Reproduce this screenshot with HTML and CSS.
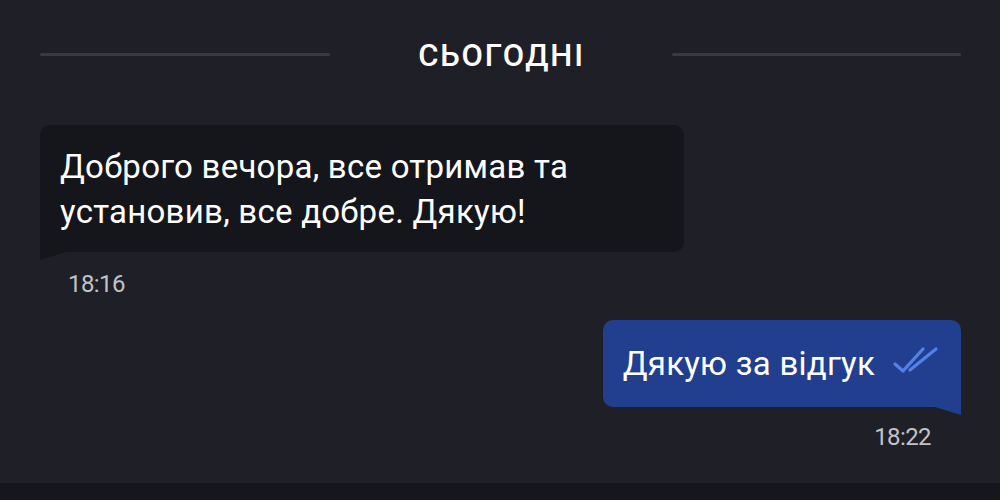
FILE: index.html
```html
<!DOCTYPE html>
<html lang="uk">
<head>
<meta charset="utf-8">
<title>Чат</title>
<link rel="stylesheet" href="styles.css">
</head>
<body>
<div class="chat">
  <div class="thread">
    <div class="day-divider">
      <span class="rule"></span>
      <span class="day-label">СЬОГОДНІ</span>
      <span class="rule"></span>
    </div>

    <div class="msg msg-in">
      <div class="bubble bubble-in">Доброго вечора, все отримав та<br>установив, все добре. Дякую!</div>
      <div class="time">18:16</div>
    </div>

    <div class="msg msg-out">
      <div class="bubble bubble-out">
        <span>Дякую за відгук</span>
        <svg class="ticks" viewBox="0 0 46 28" width="46" height="28" aria-hidden="true">
          <path d="M2 18 L10 25 L30 3" fill="none" stroke="#5282e8" stroke-width="3.2" stroke-linecap="round" stroke-linejoin="round"/>
          <path d="M17 24 L43 3" fill="none" stroke="#5282e8" stroke-width="3.2" stroke-linecap="round"/>
        </svg>
      </div>
      <div class="time">18:22</div>
    </div>
  </div>
  <div class="composer"></div>
</div>
</body>
</html>
```

FILE: styles.css
```css
* { box-sizing: border-box; }

html, body {
  margin: 0;
  height: 100%;
}

body {
  background: #1f2027;
  font-family: Roboto, "Noto Sans", sans-serif;
  color: #ffffff;
}

.chat {
  height: 500px;
  display: flex;
  flex-direction: column;
}

.thread {
  flex: 1;
  padding: 36px 39px 0 40px;
  display: flex;
  flex-direction: column;
}

/* date separator */
.day-divider {
  display: flex;
  align-items: center;
  height: 36px;
}

.rule {
  flex: 1;
  height: 3px;
  background: #393a41;
  border-radius: 2px;
}

.day-label {
  width: 342px;
  text-align: center;
  font-size: 31px;
  font-weight: 500;
  letter-spacing: 1.8px;
  line-height: 36px;
  padding-top: 4px;
  padding-left: 2px;
}

/* messages */
.msg {
  display: flex;
  flex-direction: column;
}

.msg-in {
  margin-top: 53px;
  align-items: flex-start;
}

.msg-out {
  margin-top: 22px;
  align-items: flex-end;
}

.bubble {
  position: relative;
  font-size: 33px;
  line-height: 45px;
  letter-spacing: 0.25px;
}

.bubble-in {
  width: 644px;
  background: #14161b;
  border-radius: 10px 10px 10px 0;
  padding: 19px 20px 18px 20px;
}

.bubble-in::after {
  content: "";
  position: absolute;
  left: 0;
  bottom: -8px;
  border-top: 8px solid #14161b;
  border-right: 26px solid transparent;
}

.bubble-out {
  background: #213f8e;
  border-radius: 10px 10px 0 10px;
  padding: 21px 22px 21px 20px;
  display: flex;
  align-items: center;
  gap: 18px;
}

.bubble-out::after {
  content: "";
  position: absolute;
  right: 0;
  bottom: -8px;
  border-top: 8px solid #213f8e;
  border-left: 26px solid transparent;
}

.ticks {
  display: block;
  margin-top: -8px;
}

.time {
  font-size: 24px;
  line-height: 28px;
  color: #c2c3c8;
  letter-spacing: -0.6px;
}

.msg-in .time {
  margin-top: 18px;
  margin-left: 28px;
}

.msg-out .time {
  margin-top: 16px;
  margin-right: 30px;
}

.composer {
  height: 17px;
  background: #15171d;
}
```
